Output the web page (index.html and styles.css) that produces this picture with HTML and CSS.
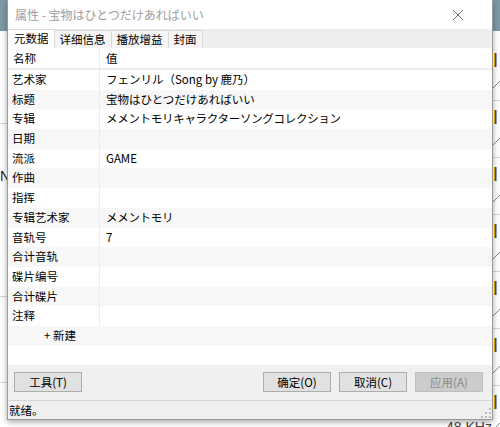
FILE: index.html
```html
<!DOCTYPE html>
<html lang="zh-CN">
<head>
    <meta charset="UTF-8">
    <title>属性</title>
    <link rel="stylesheet" href="styles.css">
</head>
<body>

    <div class="desktop">
        <!-- the player window behind the dialog -->
        <svg class="backdrop" width="500" height="427" viewBox="0 0 500 427">
            <rect x="0" y="0" width="500" height="31" fill="#7d99a6"/>
            <line x1="0" y1="123.5" x2="8" y2="123.5" stroke="#d6d6d6"/>
            <line x1="0" y1="296.5" x2="8" y2="296.5" stroke="#d6d6d6"/>
            <line x1="0" y1="382.5" x2="8" y2="382.5" stroke="#d6d6d6"/>
            <text x="0" y="181" font-family="Liberation Sans" font-size="14" fill="#222">N</text>
            <g id="marks">
                <rect x="494" y="53" width="1" height="14" fill="#e8b400"/>
                <rect x="495" y="53" width="1.5" height="14" fill="#1a4fb0"/>
                <line x1="493" y1="88" x2="500" y2="81" stroke="#888"/>
                <line x1="493" y1="100.5" x2="500" y2="100.5" stroke="#d6d6d6"/>
            </g>
            <use href="#marks" y="57"/>
            <use href="#marks" y="114"/>
            <use href="#marks" y="171"/>
            <use href="#marks" y="228"/>
            <use href="#marks" y="285"/>
            <use href="#marks" y="342"/>
            <text x="446" y="432" font-family="Liberation Sans" font-size="14" fill="#444">48 KHz</text>
        </svg>

        <div class="dialog">
            <div class="titlebar">
                <span class="title">属性 - 宝物はひとつだけあればいい</span>
                <svg class="close" width="12" height="12" viewBox="0 0 12 12">
                    <path d="M1 1 L11 11 M11 1 L1 11" stroke="#6b6b6b" stroke-width="1" fill="none"/>
                </svg>
            </div>

            <div class="tabs">
                <div class="tab active">元数据</div>
                <div class="tab">详细信息</div>
                <div class="tab">播放增益</div>
                <div class="tab">封面</div>
            </div>

            <div class="list">
                <div class="list-head">
                    <div class="cell name">名称</div>
                    <div class="cell value">值</div>
                </div>
                <div class="rows">
                    <div class="row"><div class="cell name">艺术家</div><div class="cell value">フェンリル（Song by 鹿乃）</div></div>
                    <div class="row"><div class="cell name">标题</div><div class="cell value">宝物はひとつだけあればいい</div></div>
                    <div class="row"><div class="cell name">专辑</div><div class="cell value kana">メメントモリキャラクターソングコレクション</div></div>
                    <div class="row"><div class="cell name">日期</div><div class="cell value"></div></div>
                    <div class="row"><div class="cell name">流派</div><div class="cell value">GAME</div></div>
                    <div class="row"><div class="cell name">作曲</div><div class="cell value"></div></div>
                    <div class="row"><div class="cell name">指挥</div><div class="cell value"></div></div>
                    <div class="row"><div class="cell name">专辑艺术家</div><div class="cell value kana">メメントモリ</div></div>
                    <div class="row"><div class="cell name">音轨号</div><div class="cell value">7</div></div>
                    <div class="row"><div class="cell name">合计音轨</div><div class="cell value"></div></div>
                    <div class="row"><div class="cell name">碟片编号</div><div class="cell value"></div></div>
                    <div class="row"><div class="cell name">合计碟片</div><div class="cell value"></div></div>
                    <div class="row"><div class="cell name">注释</div><div class="cell value"></div></div>
                    <div class="row add-row">+ 新建</div>
                </div>
            </div>

            <div class="buttons">
                <button class="btn">工具(T)</button>
                <div class="spacer"></div>
                <button class="btn">确定(O)</button>
                <button class="btn">取消(C)</button>
                <button class="btn" disabled>应用(A)</button>
            </div>

            <div class="statusbar">
                <span>就绪。</span>
                <svg class="grip" width="10" height="10" viewBox="0 0 10 10">
                    <rect x="8" y="0" width="2" height="2" fill="#bbb"/>
                    <rect x="4" y="4" width="2" height="2" fill="#bbb"/>
                    <rect x="8" y="4" width="2" height="2" fill="#bbb"/>
                    <rect x="0" y="8" width="2" height="2" fill="#bbb"/>
                    <rect x="4" y="8" width="2" height="2" fill="#bbb"/>
                    <rect x="8" y="8" width="2" height="2" fill="#bbb"/>
                </svg>
            </div>
        </div>
    </div>

</body>
</html>
```

FILE: styles.css
```css
* {
    margin: 0;
    padding: 0;
    box-sizing: border-box;
}

body, html {
    width: 500px;
    height: 427px;
    overflow: hidden;
    background: #fff;
    font-family: "Noto Sans CJK SC", "Noto Sans", sans-serif;
    font-size: 12px;
    color: #000;
}

.desktop {
    position: relative;
    width: 500px;
    height: 427px;
}

.backdrop {
    display: block;
}

/* dialog window sits over the player */
.dialog {
    position: absolute;
    left: 7px;
    top: 0;
    width: 486px;
    height: 420px;
    background: #f0f0f0;
    border: 1px solid #9a9a9a;
    border-top: none;
    box-shadow: 0 2px 6px rgba(0, 0, 0, 0.35);
    display: flex;
    flex-direction: column;
}

.titlebar {
    height: 29px;
    background: #fff;
    display: flex;
    align-items: center;
    justify-content: space-between;
    padding: 0 28px 0 7px;
}

.title {
    color: #a0a0a0;
    font-size: 12px;
}

.close {
    display: block;
}

.tabs {
    height: 19px;
    background: #eeeeee;
    display: flex;
    align-items: flex-end;
}

.tab {
    height: 18px;
    line-height: 17px;
    padding: 0 5px;
    border: 1px solid #d9d9d9;
    border-bottom: none;
    border-left: none;
    background: #f5f5f5;
    font-size: 11.5px;
}

.tab.active {
    height: 19px;
    background: #fff;
    padding: 0 5px 0 6px;
}

.list {
    height: 317px;
    background: #fff;
}

.list-head {
    height: 22px;
    display: flex;
    border-bottom: 2px solid #ececec;
}

.list-head .cell {
    line-height: 20px;
}

.cell {
    font-size: 11.5px;
    white-space: nowrap;
}

.cell.name {
    width: 92px;
    padding-left: 4px;
    border-right: 1px solid #ececec;
}

.list-head .cell.name {
    padding-left: 5px;
}

.cell.value {
    padding-left: 6px;
}

.kana {
    letter-spacing: -0.3px;
}

.row {
    height: 19.7px;
    line-height: 19.7px;
    display: flex;
}

.row:nth-child(even) {
    background: #f7f7f7;
}

.add-row {
    padding-left: 36px;
    font-size: 11.5px;
}

.buttons {
    height: 35px;
    display: flex;
    align-items: center;
    gap: 8px;
    padding: 0 9px 2px 6px;
}

.spacer {
    flex: 1;
}

.btn {
    width: 68px;
    height: 20px;
    border: 1px solid #adadad;
    background: #e1e1e1;
    font-family: "Noto Sans CJK SC", "Noto Sans", sans-serif;
    font-size: 11.5px;
    color: #000;
}

.btn:disabled {
    background: #cccccc;
    border-color: #bfbfbf;
    color: #8a8a8a;
}

.statusbar {
    flex: 1;
    border-top: 1px solid #d7d7d7;
    display: flex;
    align-items: center;
    justify-content: space-between;
    padding: 0 1px 0 1px;
    font-size: 11.5px;
}

.grip {
    align-self: flex-end;
    margin-bottom: 1px;
}
```
